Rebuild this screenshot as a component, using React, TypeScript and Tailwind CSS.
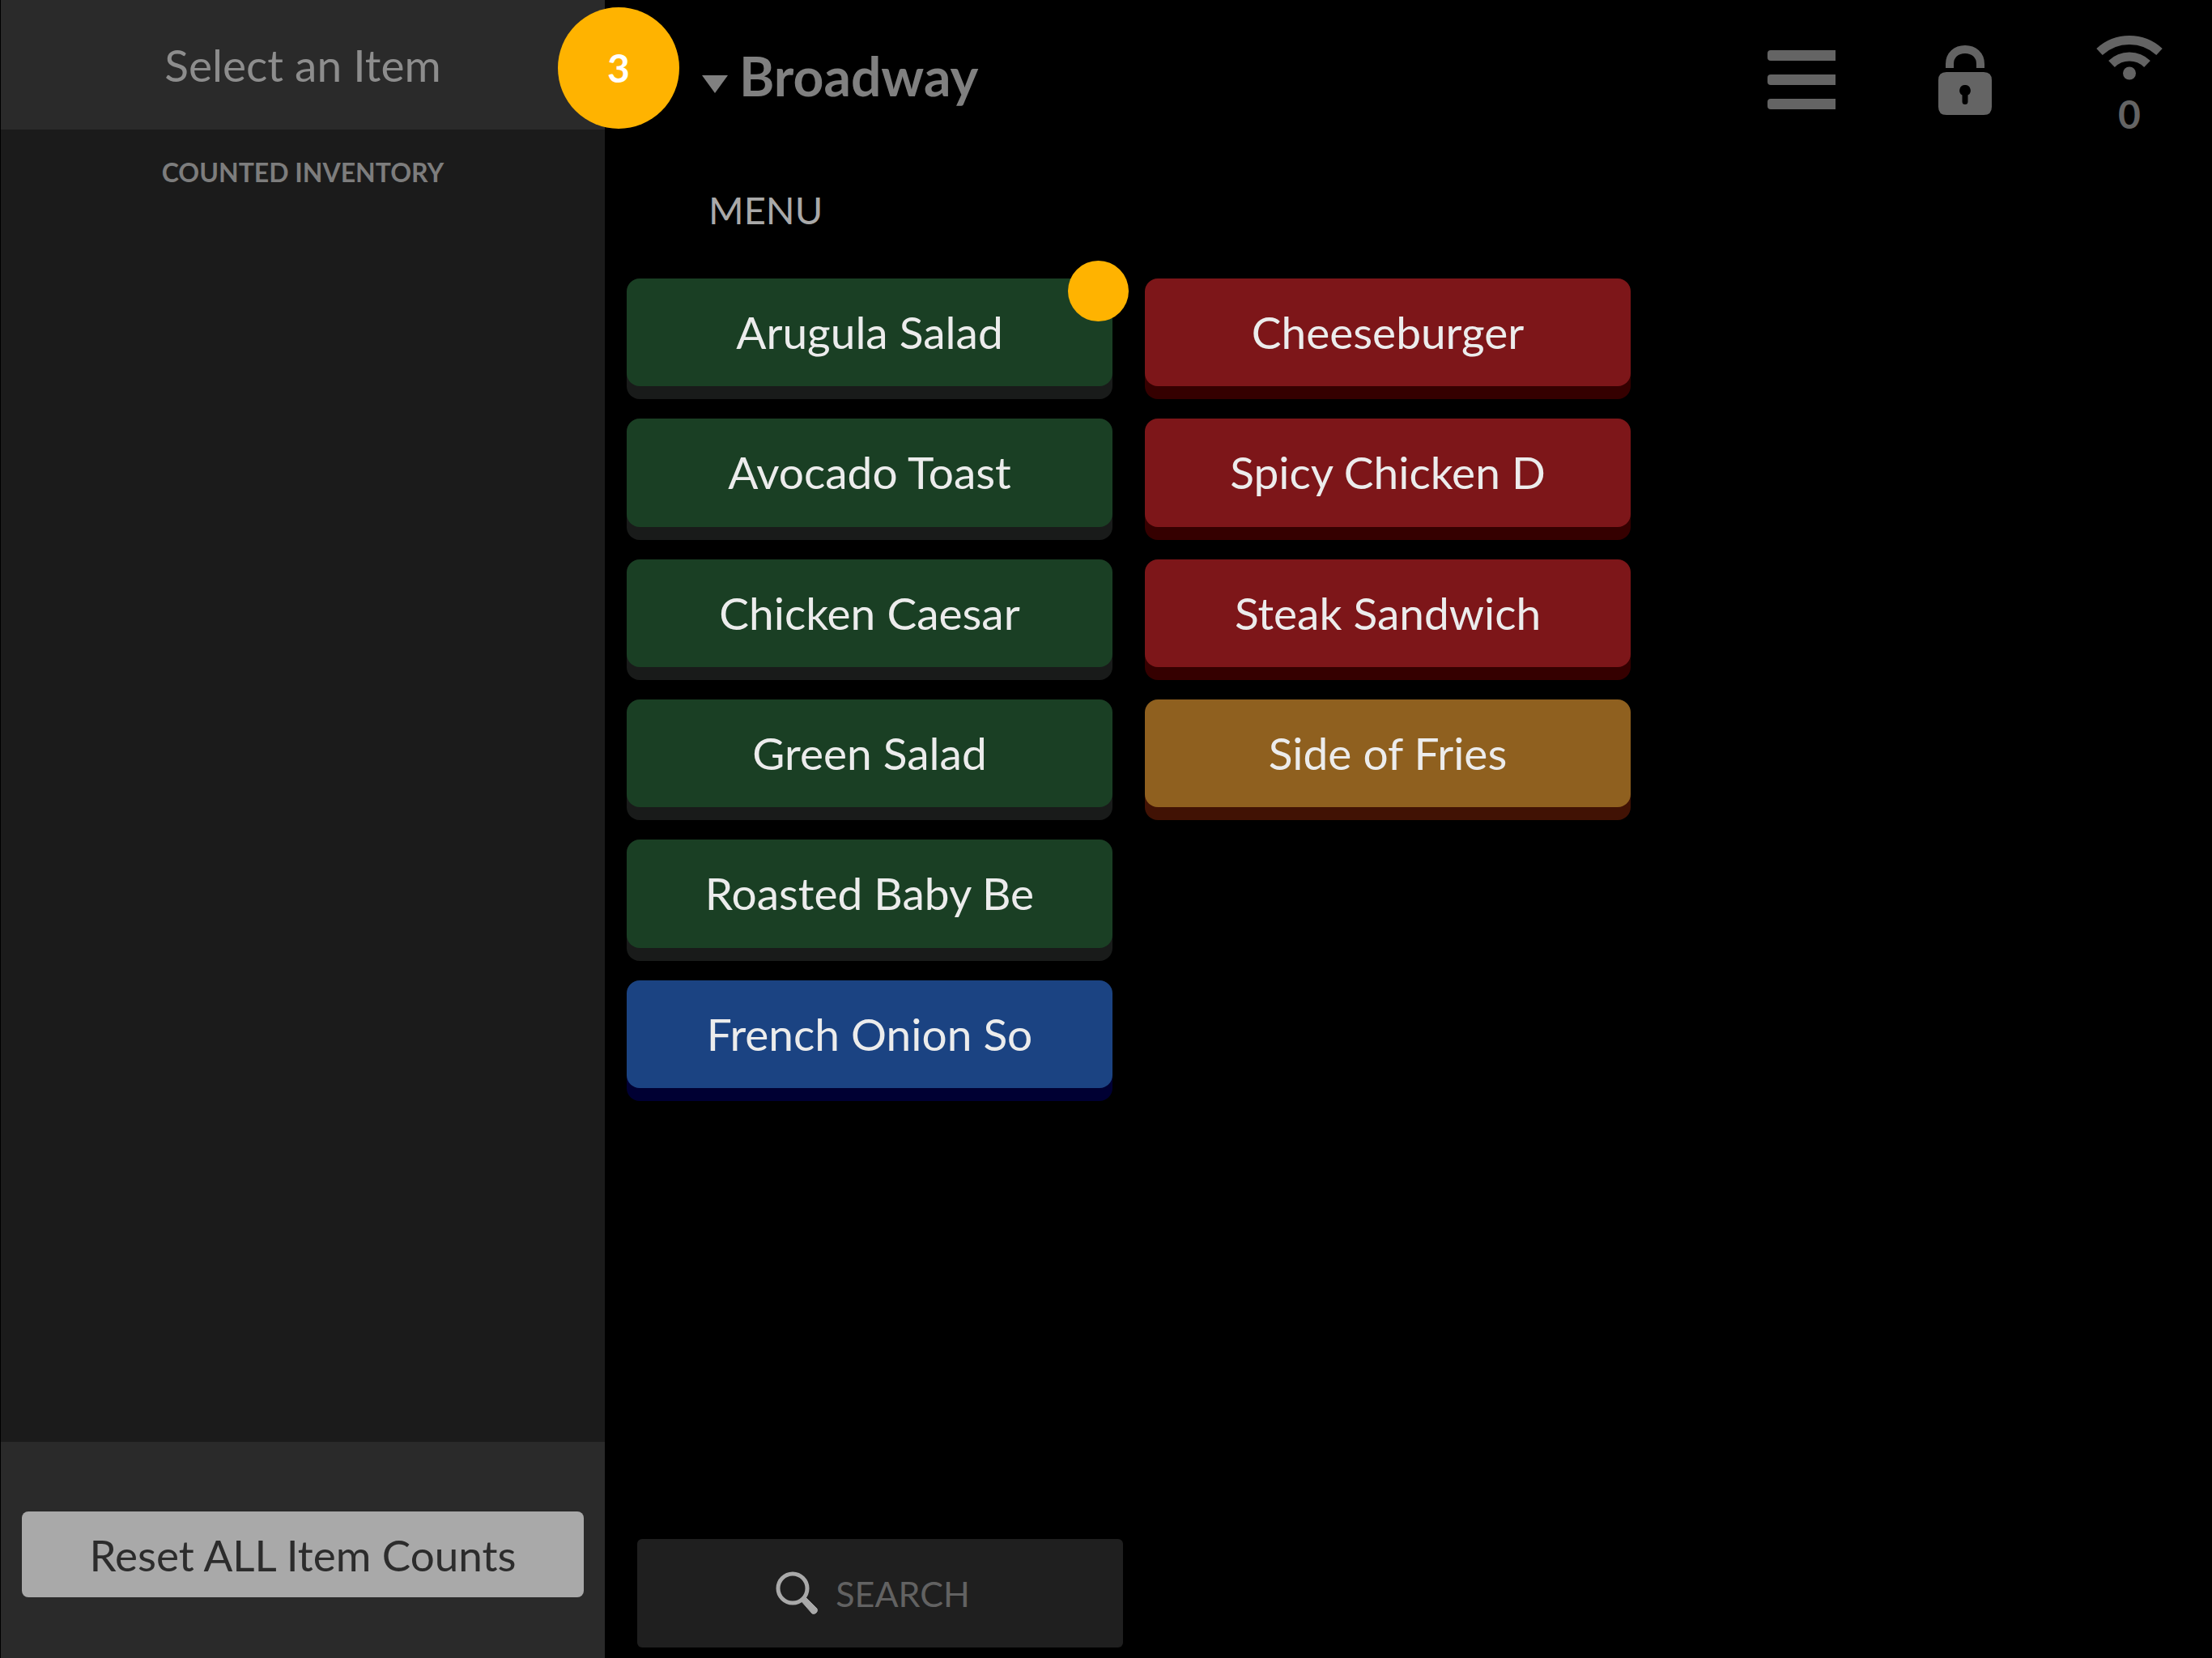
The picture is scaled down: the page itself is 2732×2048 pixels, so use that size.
import { useState } from "react";

interface MenuItem {
  name: string;
  tone: "green" | "red" | "amber" | "blue";
  counted?: boolean;
}

const menuItems: MenuItem[] = [
  { name: "Arugula Salad", tone: "green", counted: true },
  { name: "Avocado Toast", tone: "green" },
  { name: "Chicken Caesar", tone: "green" },
  { name: "Green Salad", tone: "green" },
  { name: "Roasted Baby Be", tone: "green" },
  { name: "French Onion So", tone: "blue" },
  { name: "Cheeseburger", tone: "red" },
  { name: "Spicy Chicken D", tone: "red" },
  { name: "Steak Sandwich", tone: "red" },
  { name: "Side of Fries", tone: "amber" },
];

const tones = {
  green: "bg-[#1a3f24] shadow-[0_16px_0_#191b1a]",
  red: "bg-[#7d1619] shadow-[0_16px_0_#350000]",
  amber: "bg-[#8f601f] shadow-[0_16px_0_#411204]",
  blue: "bg-[#1b4382] shadow-[0_16px_0_#000033]",
};

function LockIcon() {
  return (
    <svg viewBox="0 0 66 86" className="h-[86px] w-[66px]" aria-hidden="true">
      <path
        d="M14 28V23C14 12 22 5 33 5S52 12 52 23V28"
        fill="none"
        stroke="currentColor"
        strokeWidth="10"
      />
      <path
        fillRule="evenodd"
        fill="currentColor"
        d="M10 33H56Q66 33 66 43V76Q66 86 56 86H10Q0 86 0 76V43Q0 33 10 33ZM33 49A6.700 6.700 0 0 0 29.500 61.500V69.500A3.500 3.500 0 0 0 36.500 69.500V61.500A6.700 6.700 0 0 0 33 49Z"
      />
    </svg>
  );
}

function WifiIcon() {
  return (
    <svg viewBox="0 0 82 55" className="h-[55px] w-[82px]" aria-hidden="true">
      <g fill="none" stroke="currentColor" strokeWidth="11">
        <path d="M4 20A54.500 54.500 0 0 1 78 20" />
        <path d="M19 35A31.400 31.400 0 0 1 63 35" />
      </g>
      <circle cx="41" cy="46.500" r="8" fill="currentColor" />
    </svg>
  );
}

function SearchIcon() {
  return (
    <svg viewBox="0 0 54 54" className="h-[54px] w-[54px]" aria-hidden="true">
      <circle cx="21" cy="21" r="18" fill="none" stroke="currentColor" strokeWidth="5" />
      <path
        d="M31 36L36 31L51 46A4.500 4.500 0 0 1 45 52Z"
        fill="currentColor"
        stroke="currentColor"
        strokeWidth="1"
        strokeLinejoin="round"
      />
    </svg>
  );
}

function MenuButton({ item, onSelect }: { item: MenuItem; onSelect: () => void }) {
  return (
    <button
      type="button"
      onClick={onSelect}
      className={`relative mb-4 rounded-2xl text-[55px] leading-none text-[#ececec] ${tones[item.tone]}`}
    >
      {item.name}
      {item.counted && (
        <span className="absolute -right-5 -top-[22px] h-[75px] w-[75px] rounded-full bg-[#ffb300]" />
      )}
    </button>
  );
}

export default function App() {
  const [selected, setSelected] = useState("");

  return (
    <div className="grid min-h-screen grid-cols-[747fr_1985fr] bg-black font-['Lato','Open_Sans',sans-serif]">
      <aside className="flex flex-col border-l border-black bg-[#1b1b1b]">
        <header className="relative flex h-40 items-center justify-center bg-[#2a2a2a]">
          <h1 className="text-[55px] leading-none text-[#8d8d8d]">{selected || "Select an Item"}</h1>
          <span className="absolute -right-[92px] top-[9px] flex h-[150px] w-[150px] items-center justify-center rounded-full bg-[#ffb300] text-[48px] font-bold leading-none text-white">
            3
          </span>
        </header>
        <h2 className="mt-[37px] text-center text-[32px] font-bold leading-8 text-[#7d7d7d]">
          COUNTED INVENTORY
        </h2>
        <footer className="mt-auto bg-[#2a2a2a] px-[26px] pb-[75px] pt-[86px]">
          <button
            type="button"
            onClick={() => setSelected("")}
            className="h-[106px] w-full rounded-lg bg-[#a9a9a9] text-[53px] leading-none text-[#2c2c2c]"
          >
            Reset ALL Item Counts
          </button>
        </footer>
      </aside>

      <main className="flex flex-col">
        <header className="flex h-48 items-start justify-between pl-[120px] pr-[61px] text-[#646464]">
          <button type="button" className="mt-[62px] flex items-center gap-[14px] text-[#808080]">
            <svg viewBox="0 0 32 22" className="mt-5 h-[22px] w-8" aria-hidden="true">
              <path d="M0 0H32L16 22Z" fill="currentColor" />
            </svg>
            <span className="text-[66px] font-bold leading-[64px]">Broadway</span>
          </button>
          <div className="flex items-start">
            <button type="button" aria-label="Menu" className="mr-[127px] mt-[62px] flex w-[84px] flex-col gap-[17px]">
              <span className="h-[13px] w-full rounded-l-sm bg-current" />
              <span className="h-[13px] w-full rounded-l-sm bg-current" />
              <span className="h-[13px] w-full rounded-l-sm bg-current" />
            </button>
            <button type="button" aria-label="Lock" className="mr-[129px] mt-14">
              <LockIcon />
            </button>
            <div className="mt-11 flex flex-col items-center">
              <WifiIcon />
              <span className="mt-[18px] text-[48px] font-bold leading-[48px]">0</span>
            </div>
          </div>
        </header>

        <h2 className="mt-[43px] pl-[128px] text-[47px] leading-[48px] text-[#a9a9a9]">MENU</h2>

        <div className="mt-[61px] grid h-[1016px] grid-flow-col grid-cols-3 grid-rows-6 gap-x-10 gap-y-6 pl-[27px] pr-[78px]">
          {menuItems.map((item) => (
            <MenuButton key={item.name} item={item} onSelect={() => setSelected(item.name)} />
          ))}
        </div>

        <div className="mt-auto grid grid-cols-3 gap-x-10 pb-[13px] pl-[40px] pr-[65px]">
          <button
            type="button"
            className="flex h-[134px] items-center justify-center gap-5 rounded-md bg-[#1f1f1f] pr-[18px] text-[43px] leading-none text-[#626262]"
          >
            <span className="text-[#a9a9a9]">
              <SearchIcon />
            </span>
            SEARCH
          </button>
        </div>
      </main>
    </div>
  );
}
